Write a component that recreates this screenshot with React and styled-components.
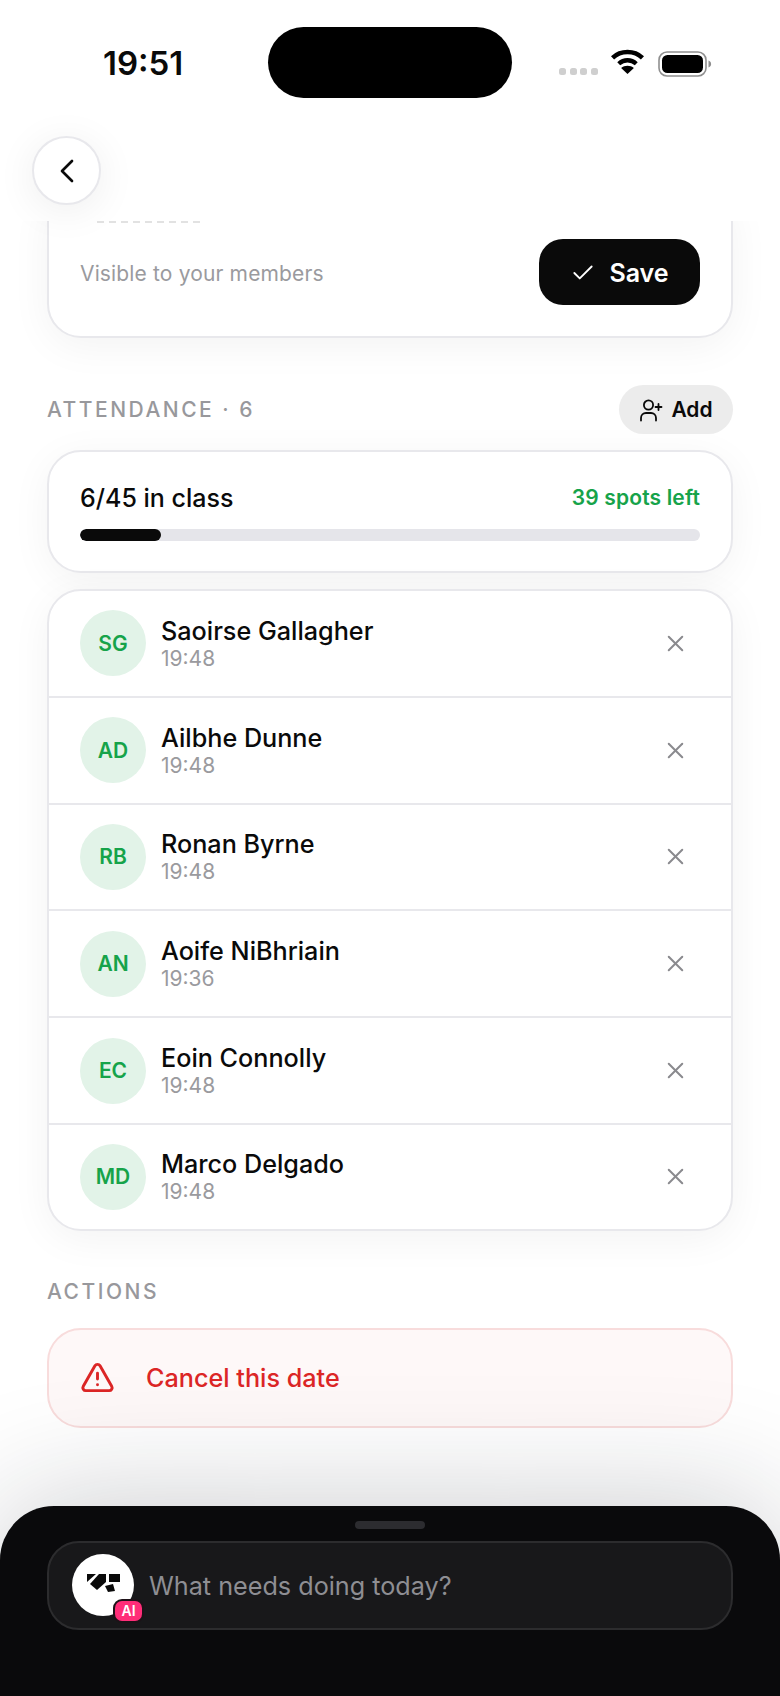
import React from "react";
import styled, { createGlobalStyle } from "styled-components";
import { ChevronLeft, Check, X, TriangleAlert } from "lucide-react";

const Global = createGlobalStyle`
  html, body { margin: 0; padding: 0; background: #fff; }
  * { box-sizing: border-box; }
  body { font-family: Inter, "Liberation Sans", sans-serif; color: #0a0a0a; }
`;

const Page = styled.div`
  width: 780px; height: 1696px; display: flex; flex-direction: column;
  overflow: hidden; background: #fff; position: relative;
`;
const Header = styled.header`
  height: 221px; flex: none; background: #fff; position: relative; z-index: 2;
  display: flex; flex-direction: column;
`;
const StatusBar = styled.div`
  height: 136px; display: grid; grid-template-columns: 268px 244px 1fr; padding-top: 27px; flex: none; align-items: start;
`;
const Time = styled.div`
  font-size: 33px; font-weight: 600; line-height: 40px; margin: 16px 0 0 103px; letter-spacing: 0;
`;
const Island = styled.div`
  width: 244px; height: 71px; background: #000; border-radius: 36px;
`;
const StatusIcons = styled.div`
  display: flex; align-items: flex-start; padding-left: 47px;
`;
const Dots = styled.div`
  display: flex; gap: 3.5px; margin: 41px 13px 0 0;
`;
const Dot = styled.span`
  width: 7px; height: 7px; border-radius: 2.5px; background: #cfcfcf;
`;
const WifiSvg = styled.svg`
  width: 33px; height: 25px; margin: 22px 14px 0 0; flex: none;
`;
const BatterySvg = styled.svg`
  width: 54px; height: 26px; margin-top: 24px; flex: none;
`;
const BackButton = styled.button`
  width: 69px; height: 69px; margin-left: 32px; border-radius: 50%; background: #fff;
  border: 2px solid #e8e8ec; display: flex; align-items: center; justify-content: center; padding: 0;
  box-shadow: 0 6px 40px rgba(0,0,0,.07); color: #0a0a0a;
`;
const Main = styled.main`
  flex: 1; padding: 0 47px; overflow: hidden; position: relative; min-height: 0;
`;
const Card = styled.section`
  background: #fff; border: 2px solid #e8e8ec; border-radius: 34px;
  box-shadow: 0 8px 40px rgba(0,0,0,.05);
`;
const NoteCard = styled(Card)`
  margin-top: -32px; padding: 30px 31px 31px;
`;
const DashedRule = styled.div`
  margin-left: 17px; width: 106px; height: 2px;
  background: repeating-linear-gradient(90deg, #e2e2e2 0 7px, transparent 7px 12px);
`;
const NoteRow = styled.div`
  display: flex; align-items: center; justify-content: space-between; margin-top: 16px;
`;
const Muted = styled.span`
  font-size: 21px; letter-spacing: .15px; color: #9a9a9e; line-height: 24px; margin-top: 3px;
`;
const SaveButton = styled.button`
  width: 161px; height: 66px; border: 0; border-radius: 24px; background: #0a0a0a; color: #fff;
  font: 600 25px Inter, sans-serif; display: flex; align-items: center; justify-content: center; gap: 13px; padding: 1px 0 0;
`;
const SectionHead = styled.div`
  display: flex; align-items: center; justify-content: space-between; margin-top: 47px; height: 49px;
`;
const SectionLabel = styled.h2`
  margin: 0; font-size: 21px; font-weight: 500; letter-spacing: 2.5px; color: #98989c; line-height: 24px;
`;
const AddButton = styled.button`
  width: 114px; height: 49px; border: 0; border-radius: 25px; background: #ececec; color: #0a0a0a;
  font: 600 21px Inter, sans-serif; display: flex; align-items: center; justify-content: center; gap: 8px; padding: 0;
`;
const ProgressCard = styled(Card)`
  margin-top: 16px; height: 123px; padding: 28px 31px 0;
`;
const ProgressTop = styled.div`
  display: flex; align-items: center; justify-content: space-between; height: 36px;
`;
const InClass = styled.span`
  font-size: 25px; font-weight: 500; line-height: 36px;
`;
const Spots = styled.span`
  font-size: 21px; letter-spacing: .15px; font-weight: 600; color: #16a34a; line-height: 36px;
`;
const Track = styled.div`
  height: 12px; margin-top: 13px; border-radius: 6px; background: #e5e5ea; overflow: hidden;
`;
const Fill = styled.div`
  height: 100%; background: #0a0a0a; border-radius: 6px;
`;
const List = styled(Card)`
  margin-top: 16px; overflow: hidden;
`;
const Row = styled.div`
  height: 106.8px; padding: 0 31px; display: flex; align-items: center; border-top: 2px solid #e8e8ec;
  &:first-child { border-top: 0; height: 104.8px; }
  &:last-child { height: 106px; }
`;
const Avatar = styled.div`
  width: 66px; height: 66px; border-radius: 50%; background: #e2f3e8; color: #16a34a;
  font-size: 21px; font-weight: 600; display: flex; align-items: center; justify-content: center; flex: none;
`;
const Person = styled.div`
  flex: 1; margin-left: 15px; display: flex; flex-direction: column;
`;
const Name = styled.span`
  font-size: 25.2px; font-weight: 500; line-height: 30px;
`;
const Stamp = styled.span`
  font-size: 21px; color: #9a9a9e; line-height: 25px;
`;
const RemoveButton = styled.button`
  border: 0; background: none; padding: 0; width: 28px; height: 28px; margin-right: 11px;
  color: #8a8a8e; display: flex; align-items: center; justify-content: center;
`;
const ActionsLabel = styled(SectionLabel)`
  margin-top: 49px;
`;
const CancelCard = styled.button`
  width: 100%; height: 100px; margin-top: 24px; border: 2px solid #f8dcdc; border-radius: 34px; background: #fef8f8;
  display: flex; align-items: center; padding: 0 0 0 31px; gap: 31px; color: #dc2626;
  font: 500 25.2px Inter, sans-serif; position: relative;
`;
const Sheet = styled.footer`
  height: 190px; flex: none; background: #0a0a0c; border-radius: 54px 54px 0 0; padding: 15px 47px 0;
  position: relative; z-index: 2; box-shadow: 0 0 130px rgba(20,24,40,.23);
`;
const Handle = styled.div`
  width: 70px; height: 8px; border-radius: 4px; background: #2c2c30; margin: 0 auto;
`;
const Prompt = styled.div`
  height: 89px; margin-top: 12px; border: 2px solid #2c2c2e; border-radius: 32px; background: #18181a;
  display: flex; align-items: center; padding: 0 0 2px 23px;
`;
const LogoWrap = styled.div`
  width: 62px; height: 62px; border-radius: 50%; background: #fff; position: relative; flex: none;
  display: flex; align-items: center; justify-content: center;
`;
const AiBadge = styled.span`
  position: absolute; right: -8px; bottom: -5px; width: 27px; height: 20px; border-radius: 7px;
  background: #ff2d78; color: #fff; font-size: 14px; font-weight: 600; line-height: 1;
  display: flex; align-items: center; justify-content: center; box-shadow: 0 0 0 2px #1e1218;
`;
const Placeholder = styled.span`
  margin: 2px 0 0 15px; font-size: 25.2px; color: #8e8e93; line-height: 32px;
`;

const people = [
  ["SG", "Saoirse Gallagher", "19:48"],
  ["AD", "Ailbhe Dunne", "19:48"],
  ["RB", "Ronan Byrne", "19:48"],
  ["AN", "Aoife NiBhriain", "19:36"],
  ["EC", "Eoin Connolly", "19:48"],
  ["MD", "Marco Delgado", "19:48"],
];

export default function App() {
  return (
    <Page>
      <Global />
      <Header>
        <StatusBar>
          <Time>19:51</Time>
          <Island />
          <StatusIcons>
            <Dots><Dot /><Dot /><Dot /><Dot /></Dots>
            <WifiSvg viewBox="0 0 32 24">
              <path d="M1.5 8.5C9.5 1 22.5 1 30.5 8.5" fill="none" stroke="#000" strokeWidth="4.4" />
              <path d="M7.5 14.2C12.5 9.6 19.5 9.6 24.5 14.2" fill="none" stroke="#000" strokeWidth="4.2" />
              <path d="M16 24L9.8 18.2C13.2 15.4 18.8 15.4 22.2 18.2Z" fill="#000" />
            </WifiSvg>
            <BatterySvg viewBox="0 0 54 26">
              <rect x="1" y="1" width="47" height="24" rx="8" fill="none" stroke="#8f8f8f" strokeWidth="1.6" />
              <rect x="4" y="4" width="41" height="18" rx="5.5" fill="#000" />
              <path d="M50.5 9.5c2 .8 2.6 2 2.6 3.5s-.6 2.7-2.6 3.5Z" fill="#8f8f8f" />
            </BatterySvg>
          </StatusIcons>
        </StatusBar>
        <BackButton aria-label="Back"><ChevronLeft size={40} strokeWidth={1.6} /></BackButton>
      </Header>
      <Main>
        <NoteCard>
          <DashedRule />
          <NoteRow>
            <Muted>Visible to your members</Muted>
            <SaveButton><Check size={26} strokeWidth={1.7} />Save</SaveButton>
          </NoteRow>
        </NoteCard>
        <SectionHead>
          <SectionLabel>ATTENDANCE · 6</SectionLabel>
          <AddButton>
            <svg width="24" height="24" viewBox="0 0 24 24" fill="none" stroke="#0a0a0a" strokeWidth="1.8" strokeLinecap="round">
              <circle cx="9.5" cy="7" r="4.6" />
              <path d="M2 22.5v-2.5c0-3 2.2-5 5-5h5c2.8 0 5 2 5 5v2.5" />
              <path d="M19.5 6v6M16.5 9h6" />
            </svg>
            Add
          </AddButton>
        </SectionHead>
        <ProgressCard>
          <ProgressTop>
            <InClass>6/45 in class</InClass>
            <Spots>39 spots left</Spots>
          </ProgressTop>
          <Track><Fill style={{ width: `${Math.floor((6 / 45) * 100)}%` }} /></Track>
        </ProgressCard>
        <List>
          {people.map(([initials, name, time]) => (
            <Row key={name}>
              <Avatar>{initials}</Avatar>
              <Person>
                <Name>{name}</Name>
                <Stamp>{time}</Stamp>
              </Person>
              <RemoveButton aria-label={`Remove ${name}`}><X size={27} strokeWidth={1.8} /></RemoveButton>
            </Row>
          ))}
        </List>
        <ActionsLabel>ACTIONS</ActionsLabel>
        <CancelCard><TriangleAlert size={35} strokeWidth={2} />Cancel this date</CancelCard>
      </Main>
      <Sheet>
        <Handle />
        <Prompt>
          <LogoWrap>
            <svg width="36" height="26" viewBox="0 0 36 26">
              <path d="M2 2H11L2 10Z" fill="#0a0a0a" />
              <path d="M14 2H21V10L12 18L5 12Z" fill="#0a0a0a" />
              <rect x="24" y="2" width="11" height="8" fill="#0a0a0a" />
              <path d="M20 14L28 12L30 19L23 20Z" fill="#0a0a0a" />
            </svg>
            <AiBadge>AI</AiBadge>
          </LogoWrap>
          <Placeholder>What needs doing today?</Placeholder>
        </Prompt>
      </Sheet>
    </Page>
  );
}
